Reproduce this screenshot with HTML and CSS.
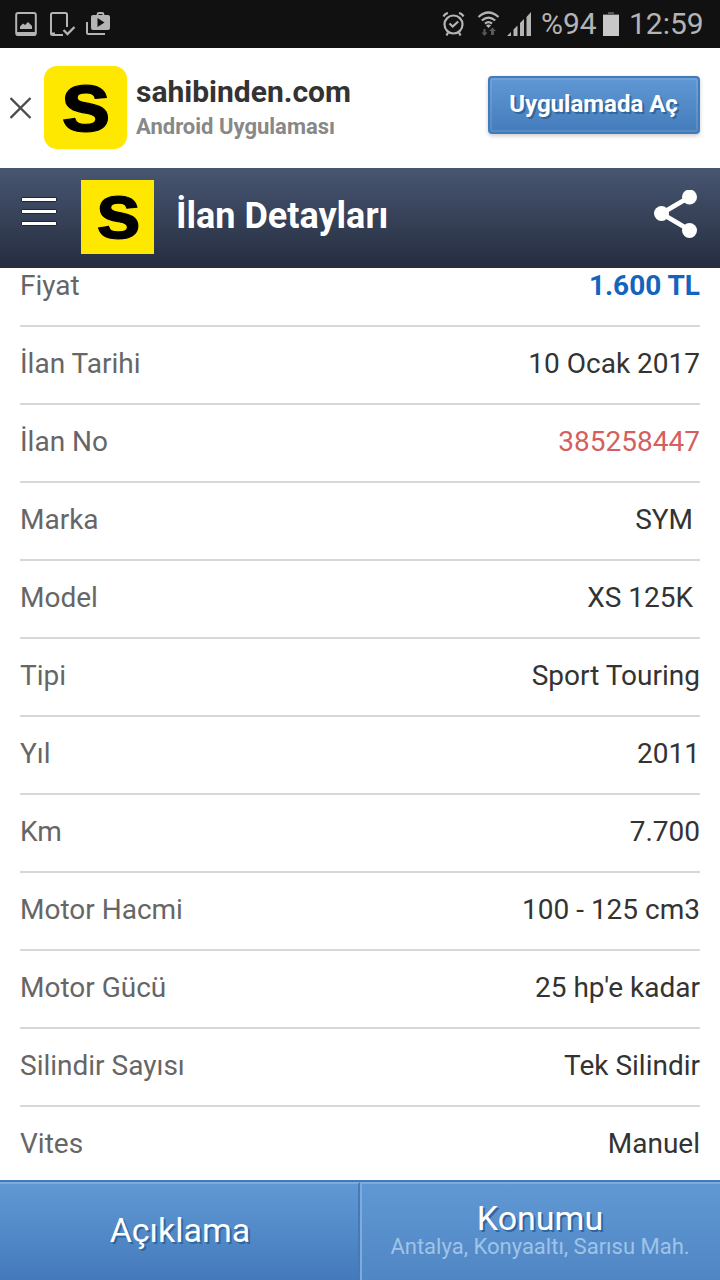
FILE: index.html
```html
<!DOCTYPE html>
<html lang="tr">
<head>
    <meta charset="UTF-8">
    <meta name="viewport" content="width=device-width, initial-scale=1.0">
    <title>İlan Detayları</title>
    <link rel="stylesheet" href="styles.css">
</head>
<body>
    <div class="status-bar">
        <svg class="status-icons" width="120" height="48" viewBox="0 0 120 48">
            <rect x="16.2" y="13" width="19.6" height="22" rx="2" fill="none" stroke="#b4b4b4" stroke-width="2"/>
            <path d="M16 32h20v2q0 2-2 2H18q-2 0-2-2zM20 29v-2.500l3-3 2 1.500 3-3 4 4v3z" fill="#b4b4b4"/>
            <path d="M67 27V14.500q0-1.500-1.500-1.500h-13q-1.500 0-1.500 1.500v19q0 1.500 1.500 1.500H63M51 33.500h4" fill="none" stroke="#b4b4b4" stroke-width="2"/>
            <path d="M63.500 30l4 4 7-7" fill="none" stroke="#b4b4b4" stroke-width="2.300"/>
            <path d="M87 22v10.500q0 1.500 1.500 1.500H105" fill="none" stroke="#b4b4b4" stroke-width="2"/>
            <path d="M97.500 16v-1.500q0-1.500 1.500-1.500h3q1.500 0 1.500 1.500V16" fill="none" stroke="#b4b4b4" stroke-width="1.800"/>
            <path fill-rule="evenodd" d="M93 15h15q2 0 2 2v11q0 2-2 2H93q-2 0-2-2V17q0-2 2-2zM97.500 18v9l7-4.500z" fill="#b4b4b4"/>
        </svg>
        <svg class="status-icons" width="94" height="48" viewBox="440 0 94 48">
            <g fill="none" stroke="#b4b4b4" stroke-width="2.200">
                <circle cx="453.500" cy="24.500" r="9"/>
                <path d="M449.500 23.500l3.200 3 5.500-5M443.500 16.500q1.500-3 4.500-3.500M463.500 16.500q-1.500-3-4.500-3.500M448 32.500l-1.500 3M459 32.500l1.500 3"/>
                <path d="M478.500 17q9.800-9 20 0M481.800 20.500q6.700-5.800 13.400 0M485 23.700q3.500-3 7 0"/>
            </g>
            <path d="M486 25.500q2.500-2 5 0l-2.500 2.500z" fill="#b4b4b4"/>
            <path d="M483.500 29h2v3.500h2l-3 3.500-3-3.500h2zM491 35h3v-4h2l-3.500-3.500-3.500 3.500h2z" fill="#5a5a5a"/>
            <path d="M507 36l4-4v4zM513.500 36v-6.500l4-4V36zM520 36V23l4-4v17zM526.500 36V17l4.500-5v24z" fill="#b4b4b4"/>
        </svg>
        <span class="battery-text">%94</span>
        <svg class="battery" width="16" height="24" viewBox="0 0 16 24">
            <path d="M5 0h6v2h5v1H0V2h5z" fill="#555"/>
            <path d="M0 3h16v21H0z" fill="#c8c8c8"/>
        </svg>
        <span class="clock">12:59</span>
    </div>

    <div class="app-banner">
        <svg class="close" width="22" height="22" viewBox="0 0 22 22"><path d="M.5 1l20 20M20.500 1l-20 20" stroke="#4d4d4d" stroke-width="2.400"/></svg>
        <div class="app-icon"><span>s</span></div>
        <div class="app-info">
            <div class="app-name">sahibinden.com</div>
            <div class="app-desc">Android Uygulaması</div>
        </div>
        <a class="open-app">Uygulamada Aç</a>
    </div>

    <header class="header">
        <div class="menu"><i></i><i></i><i></i></div>
        <div class="logo"><span>s</span></div>
        <h1>İlan Detayları</h1>
        <svg class="share" width="44" height="48" viewBox="0 0 44 48">
            <path d="M36.500 7l-28 16.500 28 16.500" fill="none" stroke="#fff" stroke-width="4.800"/>
            <circle cx="36.500" cy="7" r="7.500" fill="#fff"/>
            <circle cx="8.500" cy="23.500" r="7.500" fill="#fff"/>
            <circle cx="36.500" cy="40.500" r="7.500" fill="#fff"/>
        </svg>
    </header>

    <main class="content">
        <ul class="details">
            <li><span>Fiyat</span><strong class="price">1.600 TL</strong></li>
            <li><span>İlan Tarihi</span><strong>10 Ocak 2017</strong></li>
            <li><span>İlan No</span><strong class="ad-no">385258447</strong></li>
            <li><span>Marka</span><strong>SYM&nbsp;</strong></li>
            <li><span>Model</span><strong>XS 125K&nbsp;</strong></li>
            <li><span>Tipi</span><strong>Sport Touring</strong></li>
            <li><span>Yıl</span><strong>2011</strong></li>
            <li><span>Km</span><strong>7.700</strong></li>
            <li><span>Motor Hacmi</span><strong>100 - 125 cm3</strong></li>
            <li><span>Motor Gücü</span><strong>25 hp'e kadar</strong></li>
            <li><span>Silindir Sayısı</span><strong>Tek Silindir</strong></li>
            <li><span>Vites</span><strong>Manuel</strong></li>
        </ul>
    </main>

    <nav class="tabs">
        <a class="tab">Açıklama</a>
        <a class="tab location">Konumu<small>Antalya, Konyaaltı, Sarısu Mah.</small></a>
    </nav>
</body>
</html>
```
FILE: styles.css
```css
* {
    box-sizing: border-box;
}
body {
    margin: 0;
    height: 1280px;
    display: flex;
    flex-direction: column;
    overflow: hidden;
    background: #fff;
    color: #333;
    font-family: Roboto, sans-serif;
}
.status-bar {
    height: 48px;
    flex: none;
    display: flex;
    align-items: center;
    background: #111;
    color: #b4b4b4;
    font-size: 30px;
    line-height: 48px;
}
.status-icons {
    flex: none;
}
.status-icons + .status-icons {
    margin-left: 320px;
}
.battery-text {
    width: 62px;
    margin-left: 7px;
}
.battery {
    flex: none;
}
.clock {
    margin-left: 10px;
}
.app-banner {
    height: 120px;
    flex: none;
    display: flex;
    align-items: center;
    padding: 0 20px 0 10px;
}
.close {
    flex: none;
}
.app-icon,
.logo {
    flex: none;
    display: flex;
    justify-content: center;
    background: #ffe800;
    color: #000;
    font-family: "Liberation Sans", Arial, sans-serif;
    font-weight: bold;
    -webkit-text-stroke: 1.2px #000;
}
.app-icon span,
.logo span {
    transform: scaleX(1.06);
}
.app-icon {
    width: 83px;
    height: 83px;
    margin: -1px 9px 0 12px;
    border-radius: 13px;
    font-size: 86px;
    line-height: 70px;
}
.app-info {
    flex: 1;
    margin-top: -2px;
}
.app-name {
    font-size: 30px;
    font-weight: bold;
    line-height: 35px;
}
.app-desc {
    margin-top: 5px;
    color: #888;
    font-size: 22px;
    font-weight: bold;
    line-height: 26px;
}
.open-app {
    width: 212px;
    height: 58px;
    margin-top: -6px;
    padding-right: 1px;
    border: 2px solid #417cba;
    border-radius: 4px;
    background: linear-gradient(#6098d4, #447dbc);
    box-shadow: inset 0 0 0 2px rgba(255,255,255,0.1), 0 2px 4px rgba(0,0,0,0.2);
    color: #fff;
    font-size: 24px;
    font-weight: bold;
    line-height: 53px;
    text-align: center;
    text-shadow: 2px 2px 0 #31659d;
}
.header {
    height: 100px;
    flex: none;
    display: flex;
    padding: 12px 23px 0 21px;
    background: linear-gradient(#485672, #252d3e);
}
.menu {
    width: 60px;
    padding: 17px 0 0;
}
.menu i {
    display: block;
    width: 36px;
    height: 5px;
    margin-bottom: 7px;
    border: 1px solid #202838;
    border-radius: 1px;
    background: #fff;
}
.logo {
    width: 73px;
    height: 74px;
    padding-left: 1px;
    font-size: 77px;
    line-height: 63px;
}
.header h1 {
    flex: 1;
    margin: 0 0 0 22px;
    color: #fff;
    font-size: 36px;
    line-height: 72px;
}
.share {
    margin-top: 10px;
}
.content {
    flex: 1;
    min-height: 0;
    overflow: hidden;
}
.details {
    margin: -19px 0 0;
    padding: 0 20px;
    list-style: none;
}
.details li {
    height: 78px;
    display: flex;
    justify-content: space-between;
    border-bottom: 2px solid #d8d8d8;
    font-size: 28px;
    line-height: 73px;
}
.details span {
    color: #666;
}
.details strong {
    font-weight: normal;
}
.details .price {
    color: #1463bd;
    font-weight: bold;
}
.details .ad-no {
    color: #d55f5f;
}
.tabs {
    height: 100px;
    flex: none;
    display: flex;
    border-top: 2px solid #417cba;
}
.tab {
    width: 360px;
    padding-left: 2px;
    border-top: 2px solid #80aadb;
    border-right: 2px solid #417cba;
    background: linear-gradient(#6098d4, #447abb);
    color: #fff;
    font-size: 34px;
    line-height: 92px;
    text-align: center;
    text-shadow: 2px 2px 0 #31659d;
}
.location {
    padding: 14px 2px 0 0;
    border-right: 0;
    border-left: 2px solid #80aadb;
    background: linear-gradient(#6098d4, #4f86c3);
    line-height: 40px;
}
.location small {
    display: block;
    color: #9fc4e8;
    font-size: 22px;
    line-height: 18px;
    text-shadow: none;
}
```
